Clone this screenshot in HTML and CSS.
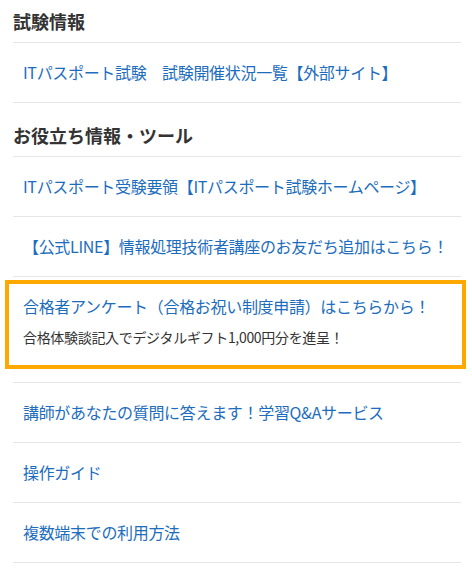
FILE: index.html
```html
<!DOCTYPE html>
<html lang="ja">
<head>
    <meta charset="UTF-8">
    <meta name="viewport" content="width=device-width, initial-scale=1.0">
    <title>試験情報</title>
    <link rel="stylesheet" href="styles.css">
</head>
<body>
    <div class="side">
        <h2 class="tit">試験情報</h2>
        <ul class="links">
            <li><a href="#">ITパスポート試験　試験開催状況一覧【外部サイト】</a></li>
        </ul>

        <h2 class="tit">お役立ち情報・ツール</h2>
        <ul class="links">
            <li><a href="#">ITパスポート受験要領【ITパスポート試験ホームページ】</a></li>
            <li><a href="#">【公式LINE】情報処理技術者講座のお友だち追加はこちら！</a></li>
            <li class="pick">
                <a href="#">
                    <span class="pick_tit">合格者アンケート（合格お祝い制度申請）はこちらから！</span>
                    <span class="pick_txt">合格体験談記入でデジタルギフト1,000円分を進呈！</span>
                </a>
            </li>
            <li><a href="#">講師があなたの質問に答えます！学習Q&amp;Aサービス</a></li>
            <li><a href="#">操作ガイド</a></li>
            <li><a href="#">複数端末での利用方法</a></li>
        </ul>
    </div>
</body>
</html>
```

FILE: styles.css
```css
* { margin:0; padding:0; box-sizing:border-box;}
ul,ol,li { list-style:none;}
a { text-decoration:none;}

body { background:#fff; font-family:"Noto Sans CJK JP", "Noto Sans", sans-serif; color:#333;}

.side { width:448px; margin-left:13px;}

.tit { font-size:18px; line-height:27px; font-weight:bold; color:#333; padding:8px 0 7px; border-bottom:1px solid #e6e6e6;}
.links + .tit { margin-top:11px;}

.links li { border-bottom:1px solid #e6e6e6;}
.links a { display:block; padding:17px 0 18px 10px; font-size:16px; line-height:24px; letter-spacing:-0.02em; color:#1c6dbd;}

.links li.pick { padding:3px 0 13px;}
.links .pick a { margin:0 -5px 0 -8px; padding:10px 14px 18px; border:4px solid #ffa800;}
.pick_tit { display:block; font-size:16px; line-height:24px; color:#1c6dbd;}
.pick_txt { display:block; margin-top:9px; font-size:14px; line-height:20px; color:#333;}
```
